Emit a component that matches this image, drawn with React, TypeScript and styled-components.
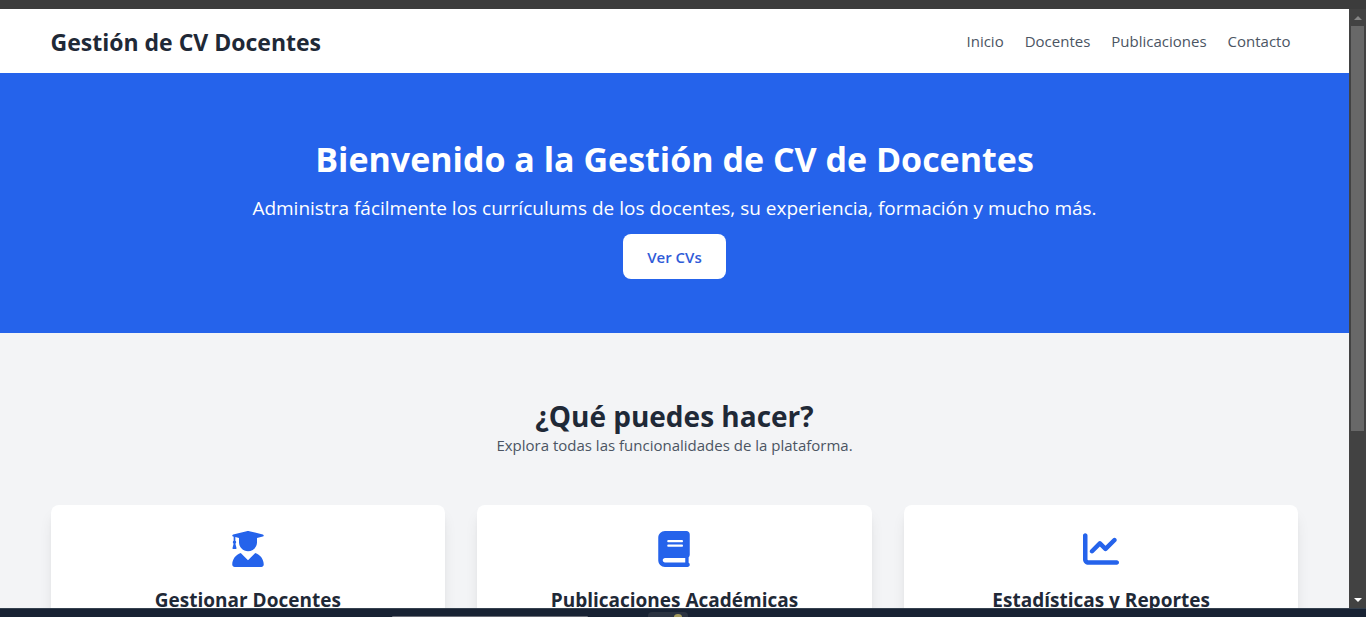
import React from "react";
import styled, { createGlobalStyle } from "styled-components";
import { FaChartLine } from "react-icons/fa6";

const GlobalStyle = createGlobalStyle`
  *, *::before, *::after { box-sizing: border-box; }
  body {
    margin: 0;
    font-family: "Segoe UI", "Open Sans", "Noto Sans", sans-serif;
    font-size: 15px;
    line-height: 24px;
    color: #1f2937;
  }
  h1, h2, h3, p { margin: 0; }
`;

const Shell = styled.div`
  display: flex;
  flex-direction: column;
  height: 100vh;
  overflow: hidden;
`;

const TopEdge = styled.div`
  flex: none;
  height: 9px;
  background: #3c3c3c;
`;

const Viewport = styled.div`
  flex: 1;
  min-height: 0;
  display: flex;
`;

const Page = styled.div`
  flex: 1;
  min-width: 0;
  overflow: hidden;
  background: #f3f4f6;
`;

const Container = styled.div`
  max-width: 1280px;
  margin: 0 auto;
  padding: 0 16px;
`;

const Header = styled.header`
  background: #ffffff;
`;

const HeaderRow = styled(Container)`
  display: flex;
  align-items: flex-start;
  justify-content: space-between;
  padding-top: 17px;
  padding-bottom: 15px;
`;

const Brand = styled.h1`
  font-size: 23px;
  line-height: 32px;
  font-weight: 700;
`;

const Nav = styled.nav`
  display: flex;
  gap: 21px;
  padding: 3px 8px 0 0;
`;

const NavLink = styled.a`
  color: #4b5563;
  text-decoration: none;
`;

const Hero = styled.section`
  display: flex;
  flex-direction: column;
  align-items: center;
  padding: 66px 16px 54px;
  background: #2563eb;
  color: #ffffff;
  text-align: center;
`;

const HeroTitle = styled.h2`
  font-size: 34px;
  line-height: 40px;
  font-weight: 700;
`;

const HeroText = styled.p`
  margin: 15px 0 12px;
  font-size: 19px;
  line-height: 28px;
`;

const HeroButton = styled.button`
  height: 45px;
  padding: 0 24px;
  border: 0;
  border-radius: 8px;
  background: #ffffff;
  color: #2f5bd8;
  font: inherit;
  font-weight: 600;
  cursor: pointer;
`;

const Features = styled.section`
  padding: 65px 0 64px;
`;

const FeaturesTitle = styled.h2`
  font-size: 28px;
  line-height: 36px;
  font-weight: 700;
  text-align: center;
`;

const FeaturesText = styled.p`
  line-height: 22px;
  color: #4b5563;
  text-align: center;
`;

const CardGrid = styled.div`
  display: grid;
  grid-template-columns: repeat(3, 1fr);
  gap: 32px;
  margin-top: 49px;
`;

const Card = styled.article`
  display: flex;
  flex-direction: column;
  align-items: center;
  gap: 19px;
  padding: 26px 24px;
  border-radius: 8px;
  background: #ffffff;
  box-shadow: 0 10px 15px -3px rgba(0, 0, 0, 0.1), 0 4px 6px -4px rgba(0, 0, 0, 0.1);

  svg { flex: none; color: #2563eb; }
`;

const CardTitle = styled.h3`
  font-size: 19px;
  line-height: 28px;
  font-weight: 700;
  text-align: center;
`;

const ScrollTrack = styled.div`
  flex: none;
  display: flex;
  flex-direction: column;
  align-items: center;
  width: 17px;
  background: #424242;
`;

const ScrollArrow = styled.div<{ $color: string }>`
  display: flex;
  align-items: center;
  justify-content: center;
  flex: none;
  height: 17px;
  color: ${(p) => p.$color};
`;

const ScrollLane = styled.div`
  flex: 1;
  display: flex;
  flex-direction: column;
  width: 13px;
`;

const ScrollThumb = styled.div`
  flex: 405;
  background: #686868;
`;

const ScrollRest = styled.div`
  flex: 160;
`;

const Taskbar = styled.div`
  flex: none;
  display: grid;
  grid-template-columns: 392fr 196fr 60fr 40fr 678fr;
  align-items: end;
  height: 9px;
  border-top: 1px solid #35414f;
  background: #182233;
`;

const TaskbarSearch = styled.div`
  grid-column: 2;
  height: 1px;
  border-radius: 4px 4px 0 0;
  background: #6b6e78;
`;

const TaskbarItem = styled.div`
  grid-column: 4;
  display: flex;
  align-items: end;
  justify-content: center;
  height: 5px;
  padding-left: 20px;
  border-radius: 4px 4px 0 0;
  background: #2b3341;
`;

function GraduateIcon() {
  return (
    <svg width="36" height="36" viewBox="0 0 512 512" fill="currentColor" aria-hidden>
      <path d="M45.6 79.8L52 81.3v58.5C45 143.9 40 151.3 40 160c0 8.4 4.6 15.4 11.1 19.8L35.5 242C33.8 248.9 37.6 256 43.1 256h41.8c5.5 0 9.4-7.1 7.6-14L76.9 179.8C83.4 175.4 88 168.4 88 160c0-8.8-5-16.1-12-20.3V87.1l52 12.5V160c0 70.8 57.3 128 128 128s128-57.2 128-128V99.6l82.3-19.9c18.2-4.3 18.2-27 0-31.4l-190.4-46c-13-3-26.7-3-39.7 0l-190.6 46c-18.1 4.3-18.1 27.1 0 31.5zM359.2 312.8L256 416 152.8 312.8C82.9 335.1 32 400 32 477.3 32 496.5 47.5 512 66.7 512h378.7c19.1 0 34.6-15.5 34.6-34.7 0-77.3-50.9-142.2-120.8-164.5z" />
    </svg>
  );
}

function BookIcon() {
  return (
    <svg width="32" height="36" viewBox="0 0 448 512" fill="currentColor" aria-hidden>
      <path
        fillRule="evenodd"
        d="M448 336V48c0-26.5-21.5-48-48-48H96C43 0 0 43 0 96v320c0 53 43 96 96 96h320c17.7 0 32-14.3 32-32 0-11.7-6.6-21.5-16-27.1v-81.3c9.8-8.8 16-21.4 16-35.6zM144 128h192c8.8 0 16 7.2 16 16s-7.2 16-16 16H144c-8.8 0-16-7.2-16-16s7.2-16 16-16zM144 192h192c8.8 0 16 7.2 16 16s-7.2 16-16 16H144c-8.8 0-16-7.2-16-16s7.2-16 16-16zM384 448H96c-17.7 0-32-14.3-32-32s14.3-32 32-32h288v64z"
      />
    </svg>
  );
}

function ChartIcon() {
  return <FaChartLine size={36} aria-hidden />;
}

const links = ["Inicio", "Docentes", "Publicaciones", "Contacto"];

const features = [
  { title: "Gestionar Docentes", Icon: GraduateIcon },
  { title: "Publicaciones Académicas", Icon: BookIcon },
  { title: "Estadísticas y Reportes", Icon: ChartIcon },
];

export default function App() {
  return (
    <>
      <GlobalStyle />
      <Shell>
        <TopEdge />
        <Viewport>
          <Page>
            <Header>
              <HeaderRow>
                <Brand>Gestión de CV Docentes</Brand>
                <Nav>
                  {links.map((label) => (
                    <NavLink key={label} href={`#${label.toLowerCase()}`}>
                      {label}
                    </NavLink>
                  ))}
                </Nav>
              </HeaderRow>
            </Header>
            <main>
              <Hero>
                <HeroTitle>Bienvenido a la Gestión de CV de Docentes</HeroTitle>
                <HeroText>
                  Administra fácilmente los currículums de los docentes, su experiencia, formación y mucho más.
                </HeroText>
                <HeroButton type="button">Ver CVs</HeroButton>
              </Hero>
              <Features>
                <Container>
                  <FeaturesTitle>¿Qué puedes hacer?</FeaturesTitle>
                  <FeaturesText>Explora todas las funcionalidades de la plataforma.</FeaturesText>
                  <CardGrid>
                    {features.map(({ title, Icon }) => (
                      <Card key={title}>
                        <Icon />
                        <CardTitle>{title}</CardTitle>
                      </Card>
                    ))}
                  </CardGrid>
                </Container>
              </Features>
            </main>
          </Page>
          <ScrollTrack aria-hidden>
            <ScrollArrow $color="#868686">
              <svg width="8" height="4" viewBox="0 0 8 4">
                <path d="M0 4 4 0l4 4z" fill="currentColor" />
              </svg>
            </ScrollArrow>
            <ScrollLane>
              <ScrollThumb />
              <ScrollRest />
            </ScrollLane>
            <ScrollArrow $color="#ffffff">
              <svg width="8" height="4" viewBox="0 0 8 4">
                <path d="M0 0h8L4 4z" fill="currentColor" />
              </svg>
            </ScrollArrow>
          </ScrollTrack>
        </Viewport>
        <Taskbar aria-hidden>
          <TaskbarSearch />
          <TaskbarItem>
            <svg width="8" height="3" viewBox="0 0 8 3">
              <path d="M0 3a4 3 0 0 1 8 0z" fill="#a39a5c" />
            </svg>
          </TaskbarItem>
        </Taskbar>
      </Shell>
    </>
  );
}
